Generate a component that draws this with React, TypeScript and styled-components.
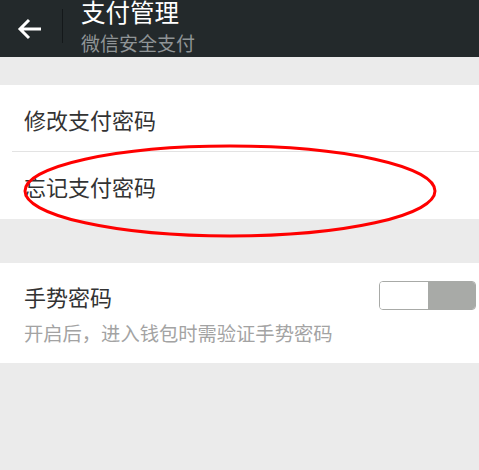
import React from "react";
import styled, { createGlobalStyle } from "styled-components";

const Global = createGlobalStyle`
  html, body { margin: 0; padding: 0; background: #ebebeb; }
  body { font-family: "Noto Sans CJK SC", "Noto Sans", sans-serif; }
`;

const Page = styled.div`
  position: relative;
  width: 479px;
  height: 470px;
  background: #ebebeb;
  overflow: hidden;
`;

const Header = styled.div`
  height: 57px;
  background: #23292b;
  display: flex;
  align-items: center;
`;

const Back = styled.div`
  width: 62px;
  height: 57px;
  display: flex;
  align-items: center;
  justify-content: center;
  padding-right: 2px;
  box-sizing: border-box;
`;

const VDivider = styled.div`
  width: 1px;
  height: 34px;
  margin-top: -6px;
  background: #14181a;
`;

const Titles = styled.div`
  align-self: flex-start;
  display: flex;
  flex-direction: column;
  margin-left: 18px;
`;

const Title = styled.div`
  color: #ffffff;
  font-size: 24.5px;
  line-height: 24px;
`;

const Sub = styled.div`
  margin-top: 7px;
  color: #8f9496;
  font-size: 19px;
  line-height: 24px;
`;

const Section = styled.div<{ $top: number }>`
  margin-top: ${(p) => p.$top}px;
  background: #ffffff;
`;

const Row = styled.div<{ $divider?: boolean }>`
  height: 67px;
  display: flex;
  align-items: center;
  padding-left: 24px;
  font-size: 22px;
  color: #333333;
  position: relative;
  ${(p) =>
    p.$divider
      ? `&::after { content: ""; position: absolute; left: 12px; right: 0; bottom: 0; height: 1px; background: #e3e3e3; }`
      : ""}
`;

const GestureRow = styled.div`
  height: 100px;
  box-sizing: border-box;
  padding: 18px 3px 0 24px;
  display: flex;
  justify-content: space-between;
`;

const GestureText = styled.div`
  display: flex;
  flex-direction: column;
`;

const GestureTitle = styled.div`
  font-size: 22px;
  line-height: 30px;
  color: #333333;
`;

const GestureSub = styled.div`
  margin-top: 9px;
  font-size: 19.3px;
  line-height: 26px;
  color: #a3a3a3;
`;

const Toggle = styled.div`
  width: 97px;
  height: 29px;
  box-sizing: border-box;
  border: 1px solid #a8aaa7;
  border-radius: 4px;
  display: flex;
  overflow: hidden;
`;

const Knob = styled.div`
  width: 48px;
  background: #ffffff;
  border-right: 1px solid #a8aaa7;
`;

const Track = styled.div`
  flex: 1;
  background: #a8aaa7;
`;

const Annotation = styled.svg`
  position: absolute;
  left: 0;
  top: 0;
  pointer-events: none;
`;

export default function App() {
  return (
    <Page>
      <Global />
      <Header>
        <Back>
          <svg width="26" height="24" viewBox="0 0 26 24">
            <path
              d="M24 12H3M12 3L3 12L12 21"
              fill="none"
              stroke="#ffffff"
              strokeWidth="3"
              strokeLinecap="butt"
              strokeLinejoin="miter"
            />
          </svg>
        </Back>
        <VDivider />
        <Titles>
          <Title>支付管理</Title>
          <Sub>微信安全支付</Sub>
        </Titles>
      </Header>
      <Section $top={28}>
        <Row $divider>修改支付密码</Row>
        <Row>忘记支付密码</Row>
      </Section>
      <Section $top={44}>
        <GestureRow>
          <GestureText>
            <GestureTitle>手势密码</GestureTitle>
            <GestureSub>开启后，进入钱包时需验证手势密码</GestureSub>
          </GestureText>
          <Toggle>
            <Knob />
            <Track />
          </Toggle>
        </GestureRow>
      </Section>
      <Annotation width="479" height="470">
        <ellipse cx="230" cy="191" rx="205" ry="45" fill="none" stroke="#ff0000" strokeWidth="3" />
      </Annotation>
    </Page>
  );
}
